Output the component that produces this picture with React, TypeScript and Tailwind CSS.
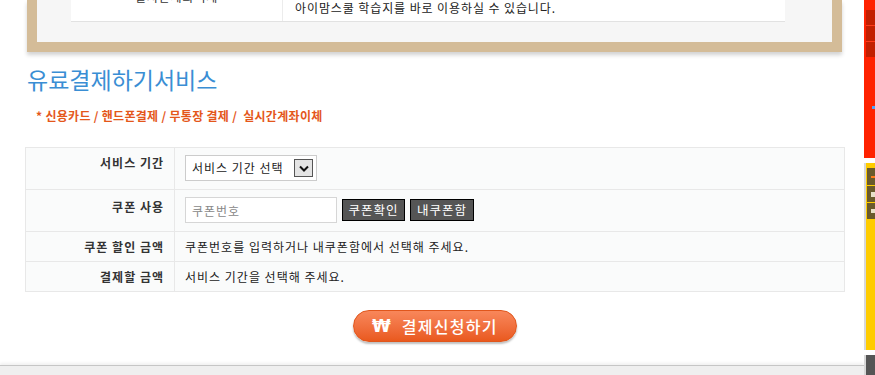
const font = "font-['Noto_Sans_CJK_KR','Noto_Sans',sans-serif]";

function Chevron() {
  return (
    <svg width="10" height="7" viewBox="0 0 10 7" className="block">
      <path d="M1 1.5 L5 5.5 L9 1.5" fill="none" stroke="#111" strokeWidth="2" />
    </svg>
  );
}

function Sidebar() {
  return (
    <div className="flex w-[11px] flex-col">
      <div className="flex h-[158px] flex-col bg-[#ff2200] pl-[2px]">
        <div className="h-[10px]" />
        <div className="h-[16px] border-b border-[#ff3a1a] bg-[#c21f00]" />
        <div className="h-[16px] border-b border-[#ff3a1a] bg-[#c21f00]" />
        <div className="h-[15px] bg-[#c21f00]" />
        <div className="ml-[6px] mt-[49px] h-[3px] w-[3px] bg-[#4aa3ff]" />
      </div>
      <div className="h-[5px] bg-white" />
      <div className="flex h-[187px] flex-col gap-[1px] border-l-2 border-[#d8d8d8] bg-[#ffcc00] pl-[1px] pt-[5px]">
        <div className="flex h-[17px] items-center bg-[#6a5a2c] pl-[4px]">
          <div className="h-[2px] w-[5px] bg-[#ff7a1a]" />
        </div>
        <div className="flex h-[16px] items-center bg-[#6a5a2c] pl-[4px]">
          <div className="h-[5px] w-[4px] bg-[#e8e0c8]" />
        </div>
        <div className="flex h-[16px] items-center bg-[#6a5a2c] pl-[4px]">
          <div className="h-[4px] w-[4px] bg-[#e8e0c8]" />
        </div>
      </div>
      <div className="h-[5px] bg-white" />
      <div className="flex-1 border-l-2 border-[#d8d8d8] bg-[#555555]" />
    </div>
  );
}

export default function App() {
  return (
    <div className={`flex h-[375px] w-[875px] overflow-hidden bg-white text-[#222] ${font}`}>
      <div className="flex w-[864px] flex-col">
        {/* framed info box, top cut off */}
        <div className="ml-[27px] h-[52px] w-[815px] bg-[#d4bc98] px-[10px] pb-[10px] shadow-[0_3px_4px_rgba(0,0,0,0.18)]">
          <div className="h-[42px] bg-[#f6f6f6] pl-[34px] pr-[47px]">
            <div className="flex h-[22px] overflow-hidden border-b border-[#e2e2e2] bg-white text-[12px] leading-[18px] tracking-[0.9px]">
              <div className="flex w-[211px] items-end justify-center pb-[15px] text-[#333]">실시간계좌이체</div>
              <div className="flex flex-1 items-end border-l border-[#ececec] pb-[4px] pl-[12px]">
                아이맘스쿨 학습지를 바로 이용하실 수 있습니다.
              </div>
            </div>
          </div>
        </div>

        <h2 className="ml-[27px] mt-[14px] text-[23px] leading-[26px] text-[#3a8ed4]">유료결제하기서비스</h2>
        <p className="ml-[36px] mt-[15px] text-[12px] font-bold leading-[18px] tracking-[0.3px] text-[#e4571b]">
          * 신용카드 / 핸드폰결제 / 무통장 결제 /&nbsp; 실시간계좌이체
        </p>

        <div className="ml-[25px] mt-[22px] w-[820px] border border-[#e8e8e8] bg-[#fafbfb] text-[12px] leading-[18px] tracking-[1px]">
          <div className="flex h-[42px] border-b border-[#e8e8e8]">
            <div className="w-[149px] border-r border-[#e8e8e8] pr-[10px] pt-[6px] text-right font-bold text-[#333]">서비스 기간</div>
            <div className="flex items-start pl-[10px] pt-[7px]">
              <div className="flex h-[26px] w-[132px] items-center border border-[#cccccc] bg-white pl-[6px] pr-[3px] text-[12px]">
                <span className="flex-1">서비스 기간 선택</span>
                <span className="flex h-[18px] w-[19px] items-center justify-center border border-[#555] bg-[#e4e4e4]">
                  <Chevron />
                </span>
              </div>
            </div>
          </div>
          <div className="flex h-[42px] border-b border-[#e8e8e8]">
            <div className="w-[149px] border-r border-[#e8e8e8] pr-[10px] pt-[8px] text-right font-bold text-[#333]">쿠폰 사용</div>
            <div className="flex items-start gap-[5px] pl-[10px] pt-[7px]">
              <input
                placeholder="쿠폰번호"
                className="h-[26px] w-[152px] border border-[#d6d6d6] bg-white pl-[6px] text-[12px] tracking-[1px] outline-none placeholder:text-[#888]"
              />
              <button className="mt-[2px] h-[22px] w-[63px] border border-black bg-[#555555] text-[12.5px] tracking-[1px] text-white">쿠폰확인</button>
              <button className="mt-[2px] h-[22px] w-[64px] border border-black bg-[#555555] text-[12.5px] tracking-[1px] text-white">내쿠폰함</button>
            </div>
          </div>
          <div className="flex h-[30px] border-b border-[#e8e8e8]">
            <div className="flex w-[149px] items-center justify-end border-r border-[#e8e8e8] pr-[10px] font-bold text-[#333]">쿠폰 할인 금액</div>
            <div className="flex items-center pl-[10px]">쿠폰번호를 입력하거나 내쿠폰함에서 선택해 주세요.</div>
          </div>
          <div className="flex h-[29px]">
            <div className="flex w-[149px] items-center justify-end border-r border-[#e8e8e8] pr-[10px] font-bold text-[#333]">결제할 금액</div>
            <div className="flex items-center pl-[10px]">서비스 기간을 선택해 주세요.</div>
          </div>
        </div>

        <div className="ml-[25px] mt-[18px] flex w-[820px] justify-center">
          <button className="flex h-[32px] w-[164px] items-center gap-[11px] rounded-full border border-[#e0561c] bg-gradient-to-b from-[#f8875a] to-[#e9591d] pl-[18px] text-white shadow-[0_2px_2px_rgba(0,0,0,0.25)]">
            <span className="font-['DejaVu_Sans',sans-serif] text-[17px] font-bold leading-none">₩</span>
            <span className="text-[16px] font-medium tracking-[1.3px]">결제신청하기</span>
          </button>
        </div>

        <div className="mt-[23px] flex-1 border-t border-[#c6c6c6] bg-[#efefef] shadow-[0_-2px_3px_rgba(0,0,0,0.06)]" />
      </div>
      <Sidebar />
    </div>
  );
}
